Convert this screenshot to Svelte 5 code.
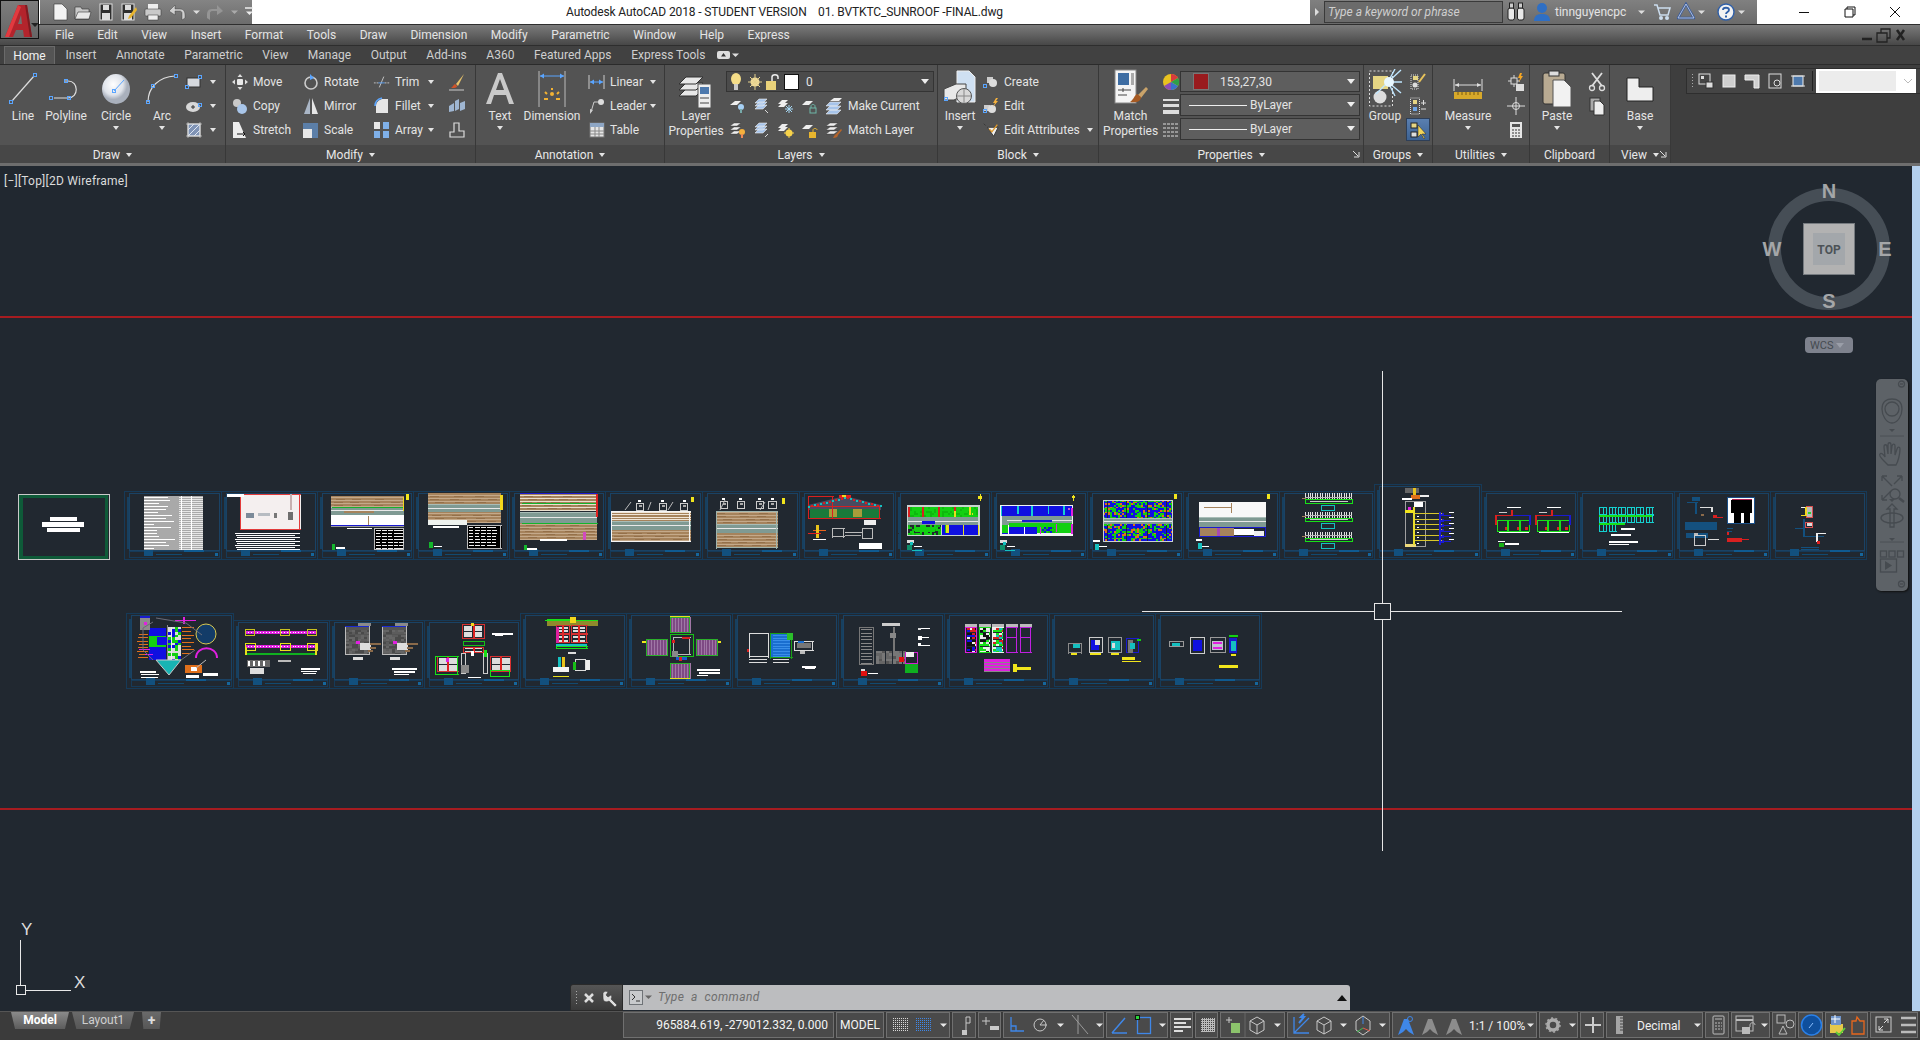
<script>
  // icon helpers: each icon is a small svg string
  const ic = (w, h, body) => `<svg width="${w}" height="${h}" viewBox="0 0 ${w} ${h}" fill="none">${body}</svg>`;
  const B = "#5aa5ff";
  const grip = (x, y) => `<rect x="${x - 1.5}" y="${y - 1.5}" width="3" height="3" stroke="${B}"/>`;
  const dn = (x, y, c = "#e8e8e8") => `<path d="M${x - 3} ${y - 1.5}h7l-3.5 3.5z" fill="${c}"/>`;

  const icons = {
    line: ic(32, 34, `<path d="M5 29 27 4" stroke="#ddd" stroke-width="1.2"/>${grip(4, 30)}${grip(28, 3)}`),
    polyline: ic(36, 34, `<path d="M6 26H20M20 9H17M20 9C31 9 31 26 20 26" stroke="#ddd" stroke-width="1.2"/>${grip(3, 26)}${grip(21, 26)}${grip(18, 9)}`),
    circle: ic(32, 34, `<defs><radialGradient id="cg" cx=".4" cy=".35"><stop offset="0" stop-color="#fff"/><stop offset=".7" stop-color="#dfe3ea"/><stop offset="1" stop-color="#a9b0bc"/></radialGradient></defs><ellipse cx="16" cy="17" rx="14" ry="15" fill="url(#cg)"/><path d="M14 19 24 8" stroke="${B}"/>${grip(14, 19)}`),
    arc: ic(34, 34, `<path d="M3 30C3 15 14 5 30 4" stroke="#ddd" stroke-width="1.2"/>${grip(3, 30)}${grip(31, 4)}${grip(8, 14)}`),
    rect: ic(18, 16, `<rect x="2" y="4" width="13" height="9" fill="#d5d8dd" stroke="#333"/>${grip(2, 13)}${grip(15, 3)}`),
    ellipseS: ic(18, 16, `<ellipse cx="8" cy="9" rx="7" ry="5" fill="#d8d8d8"/><path d="M6 9h4M8 7v4" stroke="#333"/>${grip(15, 7)}`),
    hatch: ic(18, 18, `<rect x="3" y="3" width="12" height="12" fill="#7f93b5" stroke="#eee"/><path d="M3 9 9 3M3 15 15 3M9 15l6-6" stroke="#dfe6f2"/><path d="M1 3h16M1 15h16M3 1v16M15 1v16" stroke="#ddd" stroke-width=".6"/>`),
    move: ic(18, 18, `<rect x="6" y="6" width="6" height="6" rx="1" fill="#e8e8e8"/><path d="M9 1 6.5 4h5zM9 17l-2.5-3h5zM1 9l3-2.5v5zM17 9l-3-2.5v5z" fill="#ddd"/>`),
    copy: ic(18, 18, `<circle cx="6" cy="6" r="4" fill="#c9c9c9"/><circle cx="11" cy="12" r="5" fill="#a9c6ea"/>`),
    stretch: ic(18, 20, `<path d="M2 2h6l7 16H2z" fill="#eee"/><path d="M6 14h8m-2-2 2 2-2 2" stroke="#111"/>`),
    rotate: ic(18, 18, `<circle cx="9" cy="10" r="6" stroke="#ccc" stroke-width="1.6"/><path d="M8 1v6l4-2z" fill="${B}"/>`),
    mirror: ic(18, 20, `<path d="M8 2v16H2z" fill="#aab6c6"/><path d="M10 2v16h6z" fill="#e6e6e6"/>`),
    scale: ic(18, 18, `<rect x="1" y="2" width="15" height="15" fill="#5c7fa8"/><rect x="1" y="8" width="9" height="9" fill="#e8e8e8"/>`),
    trim: ic(20, 16, `<path d="M1 9h5M13 9h6" stroke="#ccc" stroke-dasharray="2 1"/><path d="M7 14 12 2" stroke="#ccc"/><path d="M6 9h7" stroke="${B}"/>`),
    fillet: ic(18, 18, `<path d="M3 16V9C3 5 6 3 9 2h6v14z" fill="#e6e6e6"/><path d="M2 9C2 5 5 2 9 1" stroke="${B}" stroke-width="1.6"/>`),
    array: ic(18, 18, `<rect x="1" y="1" width="6" height="7" fill="#e8e8e8"/><rect x="10" y="1" width="6" height="7" fill="#7fb0e8"/><rect x="1" y="10" width="6" height="7" fill="#7fb0e8"/><rect x="10" y="10" width="6" height="7" fill="#7fb0e8"/>`),
    brush: ic(18, 18, `<path d="M16 1 8 11l2 2z" fill="#e9c36a"/><path d="M7 11c-2 1-2 3-4 4 3 0 6 0 6-2z" fill="#d2542a"/><path d="M1 17h15" stroke="#ccc"/>`),
    explode: ic(18, 16, `<path d="M1 8 6 5v8L1 14zM7 3l4-2v10l-4 2zM12 5l5-2v8l-5 2z" fill="#9fb6d2"/>`),
    edit: ic(18, 18, `<path d="M6 2h5v8h5v6H2v-5h4z" stroke="#ddd" stroke-width="1.2"/>`),
    textA: ic(30, 36, `<path d="M1 33 13 2h4l12 31h-5l-3-9H9l-3 9zM11 19h8L15 8z" fill="#c9c9c9"/>`),
    dim: ic(32, 38, `<path d="M3 1v36M29 1v36" stroke="#bbb"/><path d="M4 6h24" stroke="${B}"/><path d="M4 6l4-2.5v5zM28 6l-4-2.5v5z" fill="${B}"/><circle cx="16" cy="24" r="2" fill="#f2b233"/><path d="M16 20v-2M11 24l-2-2M21 24l2-2M8 29h4M20 29h4" stroke="#f2b233" stroke-width="2"/>`),
    linear: ic(18, 18, `<path d="M1 2v14M16 2v14" stroke="#ccc"/><path d="M2 9h13" stroke="${B}"/><path d="M2 9l4-2.5v5zM15 9l-4-2.5v5z" fill="${B}"/>`),
    leader: ic(18, 18, `<circle cx="13" cy="5" r="3" fill="#ddd"/><path d="M10 5H6L3 15" stroke="#ccc"/><path d="M2 17l0-5 3 1z" fill="#ccc"/>`),
    table: ic(18, 18, `<rect x="2" y="2" width="14" height="14" fill="#e6e6e6" stroke="#777"/><rect x="2" y="2" width="14" height="4" fill="#8ea6c4"/><path d="M7 6v10M11 6v10M2 10h14M2 13h14" stroke="#888"/>`),
    layerP: ic(36, 40, `<g fill="#e8e8e8" stroke="#333"><path d="M1 27 8 20h17l-7 7z"/><path d="M1 21 8 14h17l-7 7z"/><path d="M1 15 8 8h17l-7 7z"/></g><rect x="20" y="15" width="13" height="24" fill="#eee" stroke="#555"/><rect x="22" y="18" width="9" height="7" fill="#4d79ad"/><path d="M22 29h9M22 34h9" stroke="#444"/>`),
    bulb: ic(16, 20, `<ellipse cx="7" cy="7" rx="5" ry="6" fill="#f5dd88"/><rect x="5" y="12" width="4" height="6" fill="#c9c9c9"/>`),
    sun: ic(16, 18, `<circle cx="8" cy="9" r="4.5" fill="#f1dc9b"/><path d="M8 1v16M1 9h14M3 4l10 10M13 4 3 14" stroke="#e6d28e"/>`),
    lockO: ic(16, 18, `<rect x="1" y="8" width="10" height="9" fill="#e9d27a"/><path d="M7 8V4c0-3 6-3 6 0v2" stroke="#eee" stroke-width="1.5"/>`),
    white: ic(15, 18, `<rect x=".5" y="1.5" width="14" height="15" fill="#fff" stroke="#111"/>`),
    ly1: ic(18, 18, `<path d="M1 8 6 4h6L8 8z" fill="#eee"/><circle cx="12" cy="10" r="3" fill="#a6d0f5"/><rect x="11" y="12" width="2" height="4" fill="#7aa"/>`),
    ly2: ic(18, 18, `<path d="M2 6 6 2h8l-4 4zM2 9l4-4h8l-4 4zM2 12l4-4h8l-4 4z" fill="#a6c4ea" stroke="#eee" stroke-width=".6"/><path d="M12 13l3 3" stroke="#ddd"/>`),
    ly3: ic(18, 18, `<path d="M1 7 5 3h6L7 7zM1 10l4-4h6l-4 4z" fill="#eee"/><path d="M12 8v8M8 12h8M9 9l6 6M15 9l-6 6" stroke="#a6d8f5"/>`),
    ly4: ic(18, 18, `<path d="M1 8 5 4h7L8 8z" fill="#eee"/><rect x="9" y="11" width="6" height="5" stroke="#6fb7a8"/><path d="M10 11V9c0-2 4-2 4 0v2" stroke="#6fb7a8"/>`),
    ly5: ic(20, 18, `<path d="M2 9 6 5h11l-4 4zM2 13l4-4h11l-4 4zM2 17l4-4h11l-4 4z" fill="#a6c4ea" stroke="#eee" stroke-width=".6"/><path d="M6 4 10 1h8l-3 3z" fill="#eee"/>`),
    ly6: ic(18, 18, `<path d="M1 5 5 2h7L8 5zM1 9l4-3h7L8 9zM1 13l4-3h7l-4 3z" fill="#eee" stroke="#333" stroke-width=".4"/><circle cx="13" cy="11" r="3" fill="#f5b13d"/><rect x="12" y="13" width="2" height="4" fill="#e85"/>`),
    ly7: ic(18, 18, `<path d="M2 6 6 2h8l-4 4zM2 9l4-4h8l-4 4zM2 12l4-4h8l-4 4z" fill="#a6c4ea" stroke="#eee" stroke-width=".6"/><path d="M12 16l3-3" stroke="#ddd"/>`),
    ly8: ic(18, 18, `<path d="M1 7 5 3h6L7 7zM1 10l4-4h6l-4 4z" fill="#eee"/><circle cx="12" cy="12" r="3.5" fill="#f7d24a"/><path d="M12 7v10M7 12h10" stroke="#f7d24a"/>`),
    ly9: ic(18, 18, `<path d="M1 8 5 4h7L8 8z" fill="#eee"/><rect x="8" y="11" width="7" height="6" fill="#e8b52e"/><path d="M12 11V9c0-2 4-2 4 0" stroke="#e8b52e"/>`),
    ly10: ic(20, 18, `<path d="M2 5 6 2h8l-4 3zM2 9l4-3h8l-4 3zM2 13l4-3h8l-4 3z" fill="#eee" stroke="#333" stroke-width=".4"/><path d="M17 8l-5 5c-2 1-2 3-3 4 3 0 5-1 5-3l4-5z" fill="#b5642b"/>`),
    insert: ic(34, 38, `<path d="M14 1h12l6 6v25H14z" fill="#cfe0f2" stroke="#eee"/><path d="M1 19l12-5h10v10L11 30H1z" fill="#e8e8e8" stroke="#444"/><circle cx="21" cy="26" r="7.5" fill="#d8d8d8" stroke="#555"/><path d="M21 19v14M14 26h14" stroke="#888"/>${grip(3, 29)}`),
    create: ic(18, 16, `<rect x="5" y="3" width="6" height="6" fill="#ccc"/><circle cx="11" cy="9" r="4" fill="#ddd"/>${grip(3, 12)}`),
    editB: ic(18, 18, `<rect x="2" y="8" width="6" height="6" fill="#ccc"/><circle cx="10" cy="12" r="4" fill="#ddd"/><path d="M14 1l-3 5h2l-2 4 5-6h-2l2-3z" fill="#f5b13d"/>${grip(3, 14)}`),
    attr: ic(20, 18, `<path d="M2 2l2 2M6 6h12l-5 10z" fill="#eee" stroke="#333"/><path d="M8 8l3 3 6-8" stroke="#e09a2b" stroke-width="1.5"/>`),
    match: ic(36, 40, `<rect x="2" y="1" width="21" height="33" fill="#f4f4f4" stroke="#888"/><rect x="5" y="4" width="11" height="12" fill="#3e6da3"/><rect x="18" y="4" width="3" height="12" fill="#aaa"/><path d="M5 21h13M5 26h9M10 19v4" stroke="#444"/><path d="M33 18 25 26l3 3 7-9z" fill="#c9a36a"/><path d="M24 25c-3 2-3 5-7 8 5 1 11 0 11-5z" fill="#a65a23"/>`),
    wheel: ic(18, 18, `<circle cx="9" cy="9" r="8" fill="#e8c21f"/><path d="M9 9V1a8 8 0 0 1 7 4z" fill="#d83c3c"/><path d="M9 9l7-4a8 8 0 0 1 0 8z" fill="#2fa04a"/><path d="M9 9l7 4a8 8 0 0 1-7 4z" fill="#3a73c9"/><path d="M9 9v8a8 8 0 0 1-7-4z" fill="#8c4db5"/>`),
    lw: ic(18, 18, `<rect x="1" y="2" width="16" height="2" fill="#ddd"/><rect x="1" y="7" width="16" height="3" fill="#ddd"/><rect x="1" y="13" width="16" height="4" fill="#ddd"/>`),
    ltype: ic(18, 18, `<path d="M1 3h16M1 7h16M1 11h16M1 15h16" stroke="#ddd" stroke-dasharray="3 1"/>`),
    group: ic(34, 40, `<rect x="1.500" y="2" width="23" height="35" stroke="#ddd" stroke-dasharray="2 2"/><rect x="5" y="7" width="15" height="13" fill="#e6d684"/><circle cx="12" cy="28" r="6.500" fill="#ddd"/><path d="M20 13 33 1M20 13 33 24M20 13h14M20 13 27 0M20 13 27 27M20 13 8 25" stroke="#bfe6ff" stroke-width="1.400"/><circle cx="21" cy="13" r="5" fill="#e8f7ff"/>`),
    gr1: ic(18, 18, `<rect x="2" y="2" width="7" height="14" stroke="#ddd" stroke-dasharray="1 1"/><rect x="4" y="3" width="5" height="4" fill="#e6d684"/><circle cx="6" cy="12" r="2.500" fill="#ddd"/><path d="M16 1 10 9" stroke="#e8c35a" stroke-width="2"/>`),
    gr2: ic(18, 20, `<rect x="1.500" y="2" width="9" height="16" stroke="#ddd" stroke-dasharray="1 1"/><rect x="4" y="4" width="4" height="4" fill="#e6d684"/><rect x="4" y="11" width="4" height="4" fill="#6fa6e6"/><path d="M12 7h5M14.500 4v5M12 13h5" stroke="#ddd"/>`),
    gr3: ic(18, 20, `<rect x="2" y="3" width="6" height="5" fill="#e6d684" stroke="#222"/><rect x="2" y="12" width="6" height="5" fill="#ddd" stroke="#222"/><path d="M9 5v12l3-3 3 5 1-1-3-4h4z" fill="#f0d35a" stroke="#222" stroke-width=".5"/>`),
    measure: ic(32, 30, `<path d="M2 5v12M30 5v12" stroke="#ddd"/><path d="M3 11h26" stroke="#ddd"/><path d="M3 11l4-2v4zM29 11l-4-2v4z" fill="#ddd"/><rect x="2" y="18" width="28" height="7" fill="#d8a92a"/><path d="M6 18v3M10 18v3M14 18v3M18 18v3M22 18v3M26 18v3" stroke="#7a5b12"/>`),
    qs: ic(18, 20, `<path d="M1 9h12M7 3v12" stroke="#ddd"/><rect x="4" y="6" width="6" height="6" fill="#555" stroke="#ddd"/><rect x="9" y="12" width="8" height="7" fill="#ddd"/><path d="M13 1l-2 5h2l-1 4 4-6h-2l1-3z" fill="#f5a623"/>`),
    idpt: ic(18, 18, `<circle cx="9" cy="9" r="3.500" stroke="#ddd"/><path d="M0 9h18M9 0v18" stroke="#ddd"/>`),
    calc: ic(16, 18, `<rect x="2" y="1" width="12" height="16" fill="#e6e6e6"/><rect x="4" y="3" width="8" height="3" fill="#555"/><path d="M4 9h2M7 9h2M10 9h2M4 12h2M7 12h2M10 12h2M4 15h2M7 15h2M10 15h2" stroke="#333"/>`),
    paste: ic(30, 38, `<rect x="1" y="3" width="22" height="31" rx="2" fill="#b8aa92" stroke="#333"/><rect x="7" y="1" width="10" height="5" fill="#ddd" stroke="#333"/><path d="M11 10h11l7 7v20H11z" fill="#f2f2f2" stroke="#555"/>`),
    cut: ic(18, 20, `<path d="M4 1l10 13M14 1 4 14" stroke="#ddd" stroke-width="1.800"/><circle cx="4" cy="16" r="2.500" stroke="#ddd" stroke-width="1.300"/><circle cx="14" cy="16" r="2.500" stroke="#ddd" stroke-width="1.300"/>`),
    copyC: ic(18, 20, `<rect x="2" y="2" width="10" height="13" fill="#aaa" stroke="#333"/><path d="M6 5h6l4 4v10H6z" fill="#eee" stroke="#333"/>`),
    base: ic(28, 26, `<path d="M1 2h12v9h14v14H1z" fill="#eee" stroke="#222"/>`),
    vp1: ic(16, 16, `<rect x="1" y="1" width="11" height="10" stroke="#ddd"/><rect x="3" y="3" width="3" height="3" fill="#ddd"/><rect x="8" y="9" width="7" height="6" fill="#ddd" stroke="#333"/>`),
    vp2: ic(16, 16, `<rect x="2" y="2" width="12" height="12" fill="#cfcfcf" stroke="#eee"/>`),
    vp3: ic(16, 16, `<path d="M1 2h14v13h-5V7H1z" fill="#cfcfcf" stroke="#eee"/>`),
    vp4: ic(16, 16, `<rect x="2" y="1" width="12" height="14" stroke="#ddd"/><circle cx="10" cy="10" r="3" stroke="#ddd"/>`),
    vp5: ic(16, 16, `<rect x="3" y="3" width="10" height="10" fill="#4d79ad" stroke="#eee"/><path d="M1 3h14M1 13h14" stroke="#ddd"/>`),
  };

  // quick access toolbar, x positions come from its flex gaps
  const qat = [
    ic(16, 18, `<path d="M2 1h8l5 5v11H2z" fill="#f2f2f2" stroke="#333" stroke-width=".6"/>`),
    ic(18, 18, `<path d="M1 4h6l1 2h7v10H1z" fill="#c9c9c9" stroke="#333" stroke-width=".6"/><path d="M1 16 4 9h13l-2 7z" fill="#e8e8e8" stroke="#333" stroke-width=".6"/>`),
    ic(16, 18, `<rect x="2" y="1" width="12" height="16" fill="#2e2e2e" stroke="#ddd"/><rect x="5" y="2" width="6" height="5" fill="#ddd"/><rect x="4" y="10" width="8" height="7" fill="#ddd"/>`),
    ic(18, 18, `<rect x="2" y="1" width="12" height="16" fill="#2e2e2e" stroke="#ddd"/><rect x="5" y="2" width="6" height="5" fill="#ddd"/><rect x="4" y="10" width="8" height="7" fill="#ddd"/><path d="M16 4 9 13l-1 3 3-1 6-8z" fill="#e8b52e"/>`),
    ic(18, 18, `<rect x="4" y="1" width="10" height="6" fill="#eee"/><rect x="1" y="6" width="16" height="7" rx="1" fill="#c9c9c9" stroke="#333" stroke-width=".5"/><rect x="4" y="12" width="10" height="5" fill="#eee" stroke="#333" stroke-width=".5"/>`),
    ic(18, 18, `<path d="M1 8 7 2v4h5c4 0 5 3 5 6v3l-3 2v-7c0-1-1-2-2-2H7v4z" fill="#d0d0d0" stroke="#333" stroke-width=".4"/>`),
    ic(8, 18, dn(4, 9, "#ddd")),
    ic(18, 18, `<path d="M17 8 11 2v4H6c-4 0-5 3-5 6v3l3 2v-7c0-1 1-2 2-2h5v4z" fill="#959595"/>`),
    ic(8, 18, dn(4, 9, "#aaa")),
    ic(10, 18, `<path d="M1 5h8" stroke="#eee" stroke-width="1.500"/>${dn(5, 10, "#eee")}`),
  ];

  const menus = ["File", "Edit", "View", "Insert", "Format", "Tools", "Draw", "Dimension", "Modify", "Parametric", "Window", "Help", "Express"];
  const tabs = ["Insert", "Annotate", "Parametric", "View", "Manage", "Output", "Add-ins", "A360", "Featured Apps", "Express Tools"];

  // status bar cells, w is the cell width and body draws in local coords (y centre 13)
  const ico = "#c8c8c8";
  const dotsGrid = (x, y, c, n, m, st) => {
    let o = "";
    for (let i = 0; i < n; i++) for (let j = 0; j < m; j++) o += `<rect x="${x + i * st}" y="${y + j * 2}" width="1" height="1" fill="${c}"/>`;
    return o;
  };
  const figure = (x, c) => `<path d="M${x + 7} 7 ${x + 1} 23l5-3 3-3 3 3 5 3-6-16z" fill="${c}"/>`;
  const status = [
    { w: 211, text: "965884.619, -279012.332, 0.000", right: true },
    { w: 48, text: "MODEL" },
    { w: 64, body: dotsGrid(6, 6, "#d8d8d8", 8, 7, 2) + dotsGrid(29, 6, "#3f87e8", 8, 7, 2) + dn(56, 13) },
    { w: 24, body: `<path d="M13 19V5h4v6h-4" stroke="${ico}"/><rect x="9" y="18" width="5" height="5" fill="${ico}"/>` },
    { w: 23, body: `<path d="M3 9h8M7 5v8" stroke="${ico}"/><rect x="11" y="14" width="9" height="4" fill="${ico}"/>` },
    { w: 101, body: `<path d="M7 5v14h13M7 14h5v5" stroke="#3f87e8" stroke-width="1.300"/><circle cx="36" cy="13" r="6" stroke="${ico}"/><path d="M36 13h7M36 13l4-5" stroke="${ico}"/>${dn(56, 13)}<path d="M68 3 84 22M74 3v19" stroke="#9a9a9a"/>${dn(95, 13)}` },
    { w: 62, body: `<path d="M5 21H20M5 21 18 6" stroke="#3f87e8" stroke-width="1.500"/><rect x="30.500" y="5.500" width="13" height="16" stroke="#3f87e8" stroke-width="1.300"/><rect x="28" y="3" width="5" height="5" fill="#111"/><rect x="29" y="4" width="3" height="3" fill="#2bd63a"/>${dn(55, 13)}` },
    { w: 23, body: `<path d="M3 7h17M3 11h12M3 15h17M3 19h9" stroke="#ddd" stroke-width="2"/>` },
    { w: 23, body: `<rect x="5" y="6" width="14" height="14" fill="#bbb"/>${dotsGrid(5, 6, "#444", 7, 7, 2)}` },
    { w: 65, body: `<path d="M5 8h6M8 5v6" stroke="${ico}"/><rect x="10" y="11" width="9" height="10" fill="#8cc36c"/><path d="M24 1v25" stroke="#666"/><path d="M36 5 43 9v9l-7 4-7-4V9zM29 9l7 4 7-4M36 13v9" stroke="${ico}"/>${dn(56, 13)}` },
    { w: 103, body: `<path d="M6 5v16h15M6 21l15-15" stroke="#3f87e8" stroke-width="1.300"/><path d="M11 11 16 5h-3l3-3" stroke="#3f87e8" stroke-width="2"/><path d="M36 5 43 9v9l-7 4-7-4V9zM29 9l7 4 7-4M36 13v9" stroke="${ico}"/>${dn(55, 13)}<path d="M75 4 82 9v9l-7 5-7-5V9z" stroke="${ico}"/><path d="M75 5v7" stroke="#3f87e8"/><path d="M75 16l-6 4" stroke="#3fbf4f"/><path d="M75 16l7 3" stroke="#e05a4a"/>${dn(94, 13)}` },
    { w: 145, body: figure(4, "#3f87e8") + `<circle cx="17" cy="7" r="2.500" stroke="#3f87e8"/>` + figure(28, "#8c8c8c") + figure(52, "#8c8c8c") + `<text x="76" y="17.500" class="st">1:1 / 100%</text>` + dn(137, 13) },
    { w: 39, body: `<circle cx="13" cy="13" r="5" stroke="#aaa" stroke-width="3.500"/><circle cx="13" cy="13" r="7" stroke="#aaa" stroke-width="1.500" stroke-dasharray="2 2.400"/>${dn(32, 13)}` },
    { w: 24, body: `<path d="M12 5v16M4 13h16" stroke="#ccc" stroke-width="2"/>` },
    { w: 97, body: `<rect x="9" y="4" width="7" height="18" fill="#a5a5a5"/><path d="M13 6h3M13 9h3M13 12h3M13 15h3M13 18h3" stroke="#444"/><text x="30" y="17.500" class="st">Decimal</text>${dn(90, 13)}` },
    { w: 24, body: `<rect x="7" y="4" width="11" height="18" rx="1" stroke="#bbb"/><path d="M9 7h7M9 11h2M12 11h2M15 11h1M9 14h2M12 14h2M15 14h1M9 17h2M12 17h2M15 17h1" stroke="#bbb"/>` },
    { w: 39, body: `<rect x="4" y="4" width="17" height="15" stroke="#bbb"/><path d="M4 8h17" stroke="#bbb" stroke-width="2"/><rect x="10" y="15" width="8" height="7" fill="#bbb"/><path d="M18 15v-2c0-3 5-3 5 0" stroke="#bbb"/>${dn(32, 13)}` },
    { w: 24, body: `<rect x="4" y="3" width="8" height="8" stroke="#bbb"/><circle cx="17" cy="12" r="4" stroke="#bbb"/><path d="M10 14l4 8H6z" stroke="#bbb"/>` },
    { w: 25, body: `<circle cx="12.500" cy="13" r="10" fill="#0f4f9c" stroke="#2a80e8" stroke-width="1.500"/><path d="M10 16l4-5" stroke="#8cc0ff"/>` },
    { w: 43, body: `<rect x="4" y="12" width="13" height="9" fill="#e6c94a"/><rect x="5" y="4" width="10" height="9" fill="#6f94c9"/><path d="M9 3v8M5 7h9" stroke="#fff"/><path d="M10 20l3 3 6-7" stroke="#5fd03a" stroke-width="1.800"/><path d="M26 9h4l1-4 3 4h4v13H26z" stroke="#e8671d" stroke-width="1.300"/>` },
    { w: 48, body: `<rect x="5" y="5" width="15" height="15" stroke="#ccc"/><path d="M8 18l4-4M8 14v4h4M17 7l-4 4M13 7h4v4" stroke="#ddd"/><path d="M30 6h15M30 13h15M30 20h15" stroke="#bbb" stroke-width="2.400"/>` },
  ];

  // model space: everything here is in page coordinates, read off the crops of the sheets
  const rects = [];
  const crop = (ox, oy, sx) => (x1, y1, x2, y2, c) =>
    rects.push({ x: ox + x1 / sx, y: oy + y1 / 3, w: Math.max((x2 - x1) / sx, 1), h: Math.max((y2 - y1) / 3, 1), c });
  const L = crop(0, 480, 2.376);
  const M = crop(640, 480, 2.376);
  const R = crop(1290, 470, 2.489);
  const P = crop(895, 488, 3);

  const box = (f, x1, y1, x2, y2, c, t = 3) => {
    f(x1, y1, x2, y1 + t, c);
    f(x1, y2 - t, x2, y2, c);
    f(x1, y1, x1 + t, y2, c);
    f(x2 - t, y1, x2, y2, c);
  };
  let seed = 7;
  const rnd = () => ((seed = (seed * 16807) % 2147483647) % 1000) / 1000;
  const noise = (f, x1, y1, x2, y2, cols, st = 6) => {
    for (let y = y1; y < y2; y += st) for (let x = x1; x < x2; x += st) f(x, y, Math.min(x + st, x2), Math.min(y + st, y2), cols[Math.floor(rnd() * cols.length)]);
  };
  const brown = (f, x1, y1, x2, y2, line = "#c4a98a") => {
    f(x1, y1, x2, y2, "#a6835c");
    for (let y = y1 + 4; y < y2; y += 9) f(x1, y, x2, y + 2, line);
    for (let y = y1 + 8; y < y2 - 3; y += 9) for (let x = x1 + rnd() * 20; x < x2 - 24; x += 30 + rnd() * 30) f(x, y, x + 22, y + 3, "#94704a");
  };
  const band = (f, x1, y1, x2, y2) => {
    f(x1, y1, x2, y2, "#7f9a93");
    f(x1, y1 + (y2 - y1) / 2 - 1, x2, y1 + (y2 - y1) / 2 + 1, "#e8e8e8");
    f(x1, y1, x2, y1 + 3, "#a9bdb7");
  };
  const stable = (f, x1, y1, x2, y2) => {
    f(x1, y1, x2, y2, "#000");
    box(f, x1, y1, x2, y2, "#bbb");
    for (let y = y1 + 6; y < y2 - 3; y += 9) for (let x = x1 + 4; x < x2 - 8; x += 14) f(x, y, x + 9 + rnd() * 4, y + 3, "#eee");
  };
  const lines = (f, x, y, w, n, c = "#fff", st = 6) => {
    for (let i = 0; i < n; i++) f(x + (i % 3) * 3, y + i * st, x + w - (i % 2) * 12, y + i * st + 3, c);
  };

  // title sheet
  L(46, 45, 258, 237, "#0e5a38");
  L(55, 54, 250, 228, "#212830");
  box(L, 43, 42, 261, 240, "#c9c9c9");
  L(118, 110, 181, 122, "#fff");
  L(100, 126, 200, 142, "#fff");
  L(112, 144, 190, 156, "#fff");

  // row 1
  L(342, 48, 481, 210, "#a9a9a9");
  for (let y = 51; y < 208; y += 9) L(342, y, 360 + rnd() * 60, y + 4, "#fff");
  for (let y = 51; y < 208; y += 6) L(425, y, 481, y + 2, "#e6e6e6");
  L(430, 48, 433, 210, "#fff");
  L(455, 48, 458, 210, "#fff");

  L(570, 42, 714, 150, "#f4efef");
  box(L, 570, 42, 714, 150, "#e23b3b");
  L(540, 42, 580, 50, "#fff");
  L(585, 100, 605, 115, "#7c8a99");
  L(612, 100, 640, 110, "#b7bcc2");
  L(684, 97, 697, 120, "#6e6e6e");
  L(650, 98, 656, 112, "#777");
  L(690, 42, 694, 90, "#c7b0b0");
  lines(L, 558, 158, 155, 9);

  const sheetA = (f, x1, y1, x2) => {
    brown(f, x1, y1, x2, y1 + 32);
    band(f, x1, y1 + 32, x2, y1 + 56);
  };
  sheetA(L, 787, 48, 960);
  L(787, 104, 960, 135, "#fff");
  L(787, 134, 960, 138, "#1a1ad0");
  L(787, 138, 960, 142, "#9a9a9a");
  L(788, 80, 960, 83, "#16b02e");
  L(818, 92, 890, 98, "#a6835c");
  L(874, 108, 877, 134, "#a6835c");
  L(957, 50, 960, 92, "#f1d71c");
  L(965, 42, 972, 60, "#f1e51c");
  stable(L, 889, 145, 960, 210);
  L(790, 192, 798, 210, "#13b52c");
  L(798, 202, 820, 208, "#fff");
  L(825, 143, 885, 146, "#fff");

  sheetA(L, 1018, 40, 1192);
  brown(L, 1018, 96, 1192, 128);
  L(1018, 120, 1110, 135, "#eef2ee");
  L(1188, 45, 1195, 90, "#f1d71c");
  stable(L, 1110, 135, 1192, 207);
  L(1028, 138, 1090, 144, "#fff");
  L(1020, 185, 1030, 203, "#13b52c");
  L(1032, 197, 1052, 200, "#fff");

  brown(L, 1236, 40, 1420, 95, "#eadfce");
  band(L, 1236, 95, 1420, 128);
  brown(L, 1236, 128, 1420, 178);
  L(1236, 40, 1420, 43, "#1a1ad0");
  L(1240, 70, 1420, 73, "#13b52c");
  L(1240, 128, 1420, 131, "#13b52c");
  L(1417, 42, 1421, 110, "#e02020");
  L(1385, 155, 1392, 178, "#d24ac0");
  L(1282, 178, 1345, 183, "#fff");
  L(1244, 195, 1252, 210, "#13b52c");
  L(1252, 204, 1276, 209, "#fff");

  // roof units drawn above the two long sections
  const units = (f, arr, y) => {
    for (const x of arr) {
      box(f, x, y, x + 20, y + 24, "#ccc");
      f(x + 6, y - 9, x + 14, y - 3, "#fff");
      f(x + 7, y + 8, x + 13, y + 15, "#aaa");
    }
  };
  M(-70, 92, 120, 130, "#a6835c");
  for (let y = 96; y < 130; y += 7) M(-70, y, 120, y + 3, "#f0e6d8");
  band(M, -70, 122, 120, 150);
  brown(M, -70, 150, 120, 185);
  box(M, -70, 92, 120, 186, "#f5f5f5");
  units(M, [-10, 45, 95], 68);
  M(120, 50, 127, 66, "#f1e51c");
  units(M, [190, 230, 275, 305], 62);
  brown(M, 180, 92, 327, 132);
  band(M, 180, 132, 327, 160);
  brown(M, 180, 160, 327, 205);
  box(M, 180, 92, 327, 205, "#9fb4ad");
  M(338, 55, 344, 72, "#f1e51c");

  // roof elevation sheet
  M(404, 86, 570, 113, "#197a3a");
  M(448, 88, 468, 113, "#a89c3a");
  M(507, 88, 528, 113, "#a89c3a");
  box(M, 398, 48, 460, 118, "#d82020");
  box(M, 398, 78, 572, 118, "#d82020");
  M(472, 46, 500, 56, "#e02020");
  M(480, 46, 490, 52, "#f1d71c");
  M(410, 150, 440, 153, "#e8641c");
  M(418, 135, 424, 175, "#e8c31c");
  M(400, 158, 430, 161, "#e02020");
  box(M, 456, 143, 486, 172, "#bbb");
  box(M, 528, 145, 555, 177, "#bbb");
  M(486, 155, 528, 158, "#bbb");
  M(486, 165, 525, 168, "#aaa");
  M(532, 120, 560, 136, "#eee");
  M(520, 188, 575, 205, "#fff");
  M(410, 178, 440, 181, "#fff");

  // coloured plans, the first two come from a closer crop
  const G = "#12d012", BL = "#1010e0";
  const legend = (x) => {
    P(x, 156, x + 20, 164, "#ddd");
    P(x, 170, x + 14, 186, "#0f8f6a");
    P(x + 8, 162, x + 18, 170, "#15c0c0");
    P(x + 20, 175, x + 44, 178, "#fff");
    P(x + 14, 186, x + 44, 189, "#15c0c0");
  };
  P(36, 52, 254, 146, "#c9d3d0");
  P(40, 56, 250, 88, G);
  noise(P, 40, 56, 250, 88, [G, G, G, "#0fb80f"], 6);
  for (const x of [40, 82, 128, 176]) P(x, 56, x + 6, 88, "#d82020");
  P(176, 70, 182, 88, "#e8e01c");
  P(222, 56, 228, 80, "#e8e01c");
  P(232, 74, 236, 80, "#e8e01c");
  P(40, 88, 250, 112, "#7f9a93");
  P(40, 98, 250, 102, "#e6e6e6");
  P(80, 98, 120, 106, BL);
  P(40, 112, 140, 142, G);
  noise(P, 40, 112, 140, 142, [G, G, "#0fb80f", "#212830"], 6);
  P(60, 118, 120, 132, G);
  P(140, 112, 250, 142, BL);
  P(150, 112, 162, 136, G);
  P(152, 112, 162, 136, "#e8e01c");
  P(205, 112, 209, 142, "#e8e01c");
  P(248, 112, 252, 142, "#e8e01c");
  P(8, 135, 8, 135, "#212830");
  legend(36);
  P(250, 24, 262, 32, "#f1e51c");
  P(254, 18, 258, 38, "#f1e51c");

  P(316, 50, 534, 144, "#f0f3f2");
  P(320, 54, 530, 84, BL);
  for (const [x, w, h] of [[318, 4, 30], [365, 5, 24], [408, 6, 30], [458, 4, 24], [503, 5, 28]]) P(x, 54, x + w, 54 + h, "#15d0d0");
  P(528, 60, 533, 84, "#e020e0");
  P(518, 60, 524, 66, "#c060d0");
  P(320, 84, 530, 106, "#7f9a93");
  P(335, 96, 530, 99, "#e6e6e6");
  P(380, 96, 470, 102, "#1a1ad0");
  P(320, 106, 530, 118, G);
  P(320, 106, 340, 118, "#7f9a93");
  P(320, 118, 425, 140, BL);
  P(320, 112, 340, 136, G);
  P(340, 110, 344, 138, "#fff");
  P(388, 118, 392, 138, "#fff");
  P(425, 118, 530, 136, G);
  noise(P, 440, 118, 480, 136, [G, "#0fb80f", BL], 6);
  P(436, 118, 440, 138, "#e020e0");
  P(484, 108, 488, 132, "#e020e0");
  P(527, 108, 532, 138, "#e020e0");
  legend(316);
  P(531, 24, 539, 30, "#f1e51c");
  P(534, 20, 537, 38, "#f1e51c");

  const plan = (x1, y1, x2, y2, top, bot) => {
    const mid = y1 + (y2 - y1) * 0.42;
    noise(M, x1, y1, x2, mid, top, 5);
    band(M, x1, mid, x2, mid + 20);
    noise(M, x1, mid + 20, x2, y2, bot, 5);
    box(M, x1, y1, x2, y2, "#c9d3d0");
  };
  plan(1101, 60, 1266, 187, [BL, BL, G, G, BL, "#e0701c"], [BL, BL, G, BL, G, "#e0701c"]);
  M(1076, 180, 1092, 186, "#fff");
  M(1080, 192, 1090, 210, "#15c0c0");
  M(1090, 198, 1110, 202, "#fff");
  M(1268, 42, 1275, 58, "#f1e51c");
  M(1327, 65, 1487, 110, "#f8f8f8");
  M(1340, 82, 1405, 85, "#a6835c");
  M(1405, 70, 1408, 100, "#a6835c");
  band(M, 1327, 110, 1487, 140);
  M(1330, 140, 1410, 170, "#a6835c");
  M(1412, 148, 1460, 166, "#fff");
  M(1460, 152, 1484, 166, "#eee");
  M(1370, 145, 1378, 168, "#a84ab0");
  box(M, 1327, 140, 1487, 170, "#1a1ad0");
  M(1320, 178, 1335, 184, "#fff");
  M(1325, 190, 1335, 208, "#15c0c0");
  M(1335, 198, 1352, 202, "#fff");
  M(1490, 42, 1497, 58, "#f1e51c");

  // comb-shaped detail stack
  for (const y of [0, 55, 115]) {
    for (let x = 38; x < 155; x += 6) R(x, 70 + y, x + 3, 88 + y, "#e2e2e2");
    R(38, 80 + y, 155, 84 + y, "#bbb");
    box(R, 38, 88 + y, 157, 101 + y, "#18e018");
    R(50, 93 + y, 145, 96 + y, "#ccc");
    box(R, 78, 105 + y, 113, 122 + y, "#15c0c0");
    R(30, 84 + y, 40, 87 + y, "#a6835c");
  }

  // riser diagram
  box(R, 285, 92, 338, 230, "#a0a0a0");
  R(285, 55, 320, 70, "#666");
  R(305, 55, 313, 75, "#e8c31c");
  R(305, 75, 345, 82, "#eee");
  R(300, 75, 322, 86, "#e0701c");
  R(280, 84, 305, 90, "#fff");
  R(308, 95, 330, 110, "#fff");
  R(294, 110, 302, 118, "#e020e0");
  R(285, 120, 310, 130, "#f1e51c");
  R(285, 222, 312, 232, "#eeda7c");
  R(305, 110, 310, 225, "#e8dd2c");
  for (let y = 130; y < 225; y += 16) {
    R(310, y, 370, y + 4, "#d8c62c");
    R(316, y + 8, 322, y + 11, "#fff");
    R(370, y, 382, y + 10, "#1a1ad0");
    R(372, y, 380, y + 4, "#d8c62c");
    R(395, y - 4, 408, y, "#fff");
    R(382, y + 4, 402, y + 7, "#1a1ad0");
  }
  R(372, 125, 378, 225, "#1a1ad0");

  // two small elevations
  for (const d of [0, 100]) {
    R(510 + d, 135, 600 + d, 138, "#1a1ad0");
    box(R, 515 + d, 150, 597 + d, 185, "#18e018");
    R(510 + d, 135, 514 + d, 165, "#d82020");
    R(515 + d, 135, 555 + d, 139, "#d82020");
    R(550 + d, 120, 555 + d, 135, "#d82020");
    R(595 + d, 135, 600 + d, 165, "#1a1ad0");
    R(535 + d, 172, 545 + d, 182, "#e02020");
    R(565 + d, 172, 575 + d, 182, "#e02020");
    R(585 + d, 172, 592 + d, 182, "#e02020");
    R(540 + d, 150, 544 + d, 182, "#18e018");
    R(570 + d, 150, 574 + d, 182, "#18e018");
    R(540 + d, 112, 575 + d, 115, "#fff");
    R(520 + d, 127, 540 + d, 131, "#ccc");
    R(520 + d, 186, 595 + d, 188, "#fff");
  }
  R(518, 212, 535, 215, "#fff");
  R(535, 219, 570, 224, "#fff");
  R(520, 220, 532, 232, "#18b018");

  // cyan grid
  for (let y = 110; y < 180; y += 26) {
    for (let x = 770; x < 905; x += 23) {
      if (y > 150 && x > 815) continue;
      box(R, x, y, x + 20, y + 24, "#15d0d0");
      R(x + 9, y, x + 11, y + 24, "#15d0d0");
    }
  }
  R(770, 134, 902, 140, "#18e018");
  R(770, 160, 835, 166, "#18e018");
  R(825, 175, 860, 180, "#fff");
  R(795, 213, 866, 218, "#fff");
  R(795, 222, 845, 226, "#fff");
  R(798, 192, 848, 198, "#fff");

  // duct sheet
  R(1000, 82, 1020, 95, "#12507e");
  R(988, 97, 1015, 100, "#12507e");
  R(1008, 95, 1014, 130, "#12507e");
  R(1020, 112, 1052, 116, "#ddd");
  R(1048, 112, 1052, 128, "#ddd");
  R(1022, 133, 1030, 138, "#8a6a4a");
  R(1052, 135, 1062, 145, "#d82020");
  R(1060, 141, 1078, 143, "#d82020");
  R(982, 155, 1062, 178, "#14507e");
  R(985, 190, 1040, 205, "#14507e");
  R(1005, 190, 1015, 200, "#bbb");
  box(R, 1005, 195, 1035, 228, "#ccc");
  R(1040, 208, 1068, 211, "#ddd");
  R(1087, 82, 1157, 162, "#fff");
  box(R, 1087, 82, 1157, 162, "#1a4f88");
  R(1098, 90, 1150, 130, "#000");
  R(1104, 130, 1122, 160, "#000");
  R(1130, 130, 1146, 160, "#000");
  R(1100, 87, 1150, 91, "#b02050");
  R(1088, 175, 1102, 178, "#12507e");
  R(1088, 183, 1100, 186, "#12507e");
  R(1088, 187, 1094, 197, "#e02020");
  R(1088, 205, 1125, 216, "#d82020");
  R(1125, 208, 1142, 211, "#d82020");

  // last sheet of row 1
  R(1285, 108, 1302, 145, "#bbb");
  box(R, 1285, 108, 1303, 145, "#d85050");
  R(1272, 110, 1285, 114, "#eee");
  R(1272, 135, 1285, 139, "#f1d71c");
  R(1283, 112, 1287, 138, "#f1d71c");
  R(1290, 125, 1298, 132, "#30d030");
  box(R, 1283, 156, 1303, 174, "#d85050");
  R(1287, 160, 1299, 170, "#ddd");
  R(1277, 147, 1281, 200, "#12507e");
  R(1258, 174, 1279, 177, "#12507e");
  R(1277, 197, 1330, 200, "#12507e");
  R(1308, 190, 1333, 194, "#eee");
  R(1308, 190, 1314, 218, "#eee");
  R(1312, 212, 1320, 220, "#e02020");
  R(1272, 230, 1318, 233, "#12507e");
  R(1272, 237, 1318, 240, "#12507e");

  // row 2 sheet 1
  L(355, 443, 395, 540, BL);
  L(357, 468, 395, 471, "#eee");
  L(357, 498, 395, 501, "#eee");
  L(400, 440, 430, 540, "#eee");
  noise(L, 400, 440, 430, 540, [BL, G, G, "#ddd", "#ddd"], 8);
  L(355, 468, 395, 500, G);
  L(372, 470, 395, 495, BL);
  L(396, 436, 399, 540, "#8a8a8a");
  L(332, 412, 356, 450, "#8d8d8d");
  L(332, 407, 356, 412, "#1a1ad0");
  L(342, 425, 350, 433, "#e020e0");
  for (let i = 0; i < 8; i++) {
    L(330 - (i % 3) * 2, 462 + i * 10, 352, 465 + i * 10, "#e0701c");
    L(432, 442 + i * 11, 460 - (i % 2) * 6, 446 + i * 11, "#e0701c");
  }
  L(330, 506, 355, 510, "#e020e0");
  L(345, 522, 365, 525, "#e020e0");
  L(415, 420, 465, 423, "#e020e0");
  L(435, 410, 440, 430, "#e020e0");
  L(440, 555, 480, 580, "#e0701c");
  L(455, 560, 470, 572, "#fff");
  L(333, 572, 372, 578, "#fff");
  L(335, 582, 378, 586, "#fff");
  L(335, 590, 375, 594, "#fff");
  L(482, 580, 518, 590, "#fff");
  L(443, 586, 475, 594, "#fff");

  // row 2 sheet 2
  for (const [a, b] of [[454, 463], [496, 506]]) {
    L(582, a, 750, b, "#e020e0");
    for (let x = 590; x < 745; x += 7) L(x, a + 3, x + 3, b - 3, "#fff");
  }
  for (const x of [582, 665, 730]) {
    box(L, x, 447, x + 24, 468, "#c8c020");
    box(L, x, 490, x + 26, 513, "#e8e01c");
  }
  L(582, 518, 752, 525, "#10b020");
  L(582, 500, 586, 525, "#e8e01c");
  L(748, 490, 752, 525, "#e8e01c");
  L(586, 540, 640, 562, "#666");
  for (let x = 590; x < 636; x += 12) L(x, 544, x + 4, 558, [G, "#e8e01c", "#fff"][x % 3]);
  L(594, 565, 628, 582, "#ddd");
  L(660, 541, 690, 548, "#bbb");
  L(714, 565, 760, 570, "#fff");
  L(714, 573, 752, 577, "#fff");
  L(720, 580, 750, 584, "#fff");

  // row 2 sheet 3
  for (const d of [0, 88]) {
    L(820 + d, 438, 880 + d, 526, "#555");
    noise(L, 822 + d, 450, 878 + d, 524, ["#5c5c5c", "#4a4a4a", "#666"], 7);
    box(L, 820 + d, 438, 880 + d, 526, "#bbb");
    L(820 + d, 438, 878 + d, 442, "#1a2ad0");
    L(850 + d, 430, 880 + d, 440, "#8a8a8a");
    L(845 + d, 482, 855 + d, 492, "#e020e0");
    L(855 + d, 490, 880 + d, 510, "#ddd");
    L(880 + d, 490, 905 + d, 497, "#8a6a4a");
    L(880 + d, 500, 895 + d, 507, "#8a6a4a");
    L(875 + d, 510, 888 + d, 516, "#8a6a4a");
    L(838 + d, 530, 862 + d, 540, "#ddd");
  }
  L(932, 565, 992, 570, "#fff");
  L(935, 573, 985, 578, "#fff");
  L(935, 582, 970, 585, "#fff");

  // row 2 sheet 4
  const tiles = (f, x, y, w, h) => {
    box(f, x, y, x + w, y + h, "#d83030");
    f(x + 5, y + 5, x + w / 2 - 2, y + h / 2 - 2, "#ddd");
    f(x + w / 2 + 2, y + 5, x + w - 5, y + h / 2 - 2, "#ddd");
    f(x + 5, y + h / 2 + 2, x + w / 2 - 2, y + h - 5, "#ddd");
    f(x + w / 2 + 2, y + h / 2 + 2, x + w - 5, y + h - 5, "#ddd");
    f(x + w / 2 - 2, y + 3, x + w / 2 + 2, y + h - 3, "#e02020");
  };
  tiles(L, 1098, 432, 54, 46);
  L(1120, 428, 1128, 436, "#f1d71c");
  box(L, 1100, 482, 1152, 498, "#18c018");
  tiles(L, 1100, 500, 50, 20);
  tiles(L, 1038, 528, 52, 48);
  box(L, 1034, 528, 1090, 586, "#18e018");
  tiles(L, 1165, 528, 50, 48);
  box(L, 1165, 570, 1212, 592, "#18e018");
  L(1060, 535, 1068, 548, "#e020e0");
  box(L, 1095, 520, 1107, 582, "#ccc");
  box(L, 1147, 520, 1160, 582, "#ccc");
  L(1150, 510, 1158, 530, "#18e018");
  L(1095, 555, 1115, 578, "#888");
  L(1170, 458, 1220, 463, "#fff");
  L(1175, 464, 1195, 468, "#fff");
  L(1112, 592, 1142, 595, "#fff");
  L(1120, 512, 1128, 526, "#fff");

  // row 2 sheet 5
  L(1295, 420, 1420, 424, "#18e018");
  L(1300, 424, 1420, 440, "#8f8a2c");
  L(1300, 418, 1355, 423, "#18e018");
  L(1355, 412, 1370, 430, "#f1d71c");
  tiles(L, 1320, 435, 34, 28);
  tiles(L, 1356, 435, 40, 28);
  tiles(L, 1320, 463, 34, 27);
  tiles(L, 1356, 463, 40, 27);
  L(1322, 440, 1330, 488, "#e020a0");
  L(1322, 492, 1396, 497, "#15c0c0");
  box(L, 1320, 497, 1396, 507, "#18e018");
  L(1350, 515, 1368, 520, "#ddd");
  L(1326, 530, 1334, 560, "#15c0c0");
  L(1336, 530, 1342, 560, "#e8c31c");
  L(1315, 562, 1352, 578, "#f4f4f4");
  L(1315, 588, 1352, 592, "#e8e01c");
  box(L, 1366, 538, 1392, 574, "#ddd");
  L(1362, 545, 1368, 570, "#18c018");
  L(1392, 540, 1402, 570, "#eee");

  // row 2 sheet 6, purple quarters
  const quarter = (x1, y1, x2, y2) => {
    M(x1, y1, x2, y2, "#7e4a84");
    for (let x = x1 + 4; x < x2; x += 7) M(x, y1, x + 2, y2, "#a077a6");
    box(M, x1, y1, x2, y2, "#2bb02b");
  };
  quarter(15, 478, 68, 528);
  quarter(133, 478, 185, 528);
  quarter(72, 410, 120, 458);
  quarter(72, 548, 120, 597);
  M(5, 484, 15, 490, "#f1e51c");
  M(185, 484, 192, 490, "#f1e51c");
  M(72, 407, 120, 411, "#e8e01c");
  M(72, 594, 120, 598, "#e8e01c");
  box(M, 72, 462, 128, 530, "#18c018");
  box(M, 78, 472, 120, 524, "#bbb");
  M(76, 480, 84, 490, "#d82020");
  M(100, 470, 118, 475, "#d82020");
  M(76, 512, 90, 530, "#888");
  M(85, 530, 110, 540, "#1a5ad0");
  M(92, 532, 100, 545, "#e02020");
  M(135, 568, 190, 573, "#fff");
  M(140, 576, 190, 582, "#fff");
  M(135, 586, 160, 590, "#fff");

  // row 2 sheet 7
  box(M, 258, 458, 306, 532, "#ddd");
  M(310, 458, 358, 532, "#1a6ed0");
  for (let y = 465; y < 530; y += 8) M(315, y, 355, y + 2, "#3a8ee8");
  box(M, 308, 458, 362, 535, "#18a018");
  M(350, 458, 364, 478, "#2bc02b");
  M(255, 507, 260, 516, "#d82020");
  M(260, 538, 303, 542, "#ddd");
  M(260, 546, 303, 550, "#ddd");
  M(315, 538, 352, 542, "#ddd");
  M(315, 546, 352, 550, "#ddd");
  box(M, 365, 483, 412, 512, "#ddd");
  M(372, 488, 405, 502, "#777");
  M(375, 483, 390, 488, "#1a6ed0");
  M(380, 512, 392, 520, "#bbb");
  M(386, 558, 420, 563, "#fff");
  M(392, 564, 415, 567, "#fff");

  // row 2 sheet 8
  box(M, 520, 442, 556, 556, "#777");
  for (let y = 448; y < 550; y += 10) M(525, y, 550, y + 3, "#888");
  M(574, 430, 616, 440, "#ccc");
  M(600, 440, 605, 515, "#777");
  M(595, 460, 610, 475, "#888");
  noise(M, 560, 512, 630, 552, ["#777", "#555", "#777", "#666"], 8);
  box(M, 630, 515, 660, 552, "#d020d0");
  M(632, 515, 650, 530, "#eee");
  M(615, 532, 628, 546, "#e01010");
  M(630, 552, 660, 578, "#0fb020");
  M(525, 574, 540, 588, "#e01010");
  M(525, 568, 535, 574, "#ddd");
  M(542, 578, 565, 581, "#fff");
  M(660, 445, 668, 452, "#ddd");
  M(660, 468, 670, 480, "#fff");
  M(660, 490, 668, 500, "#fff");
  M(668, 445, 690, 448, "#fff");
  M(668, 470, 686, 473, "#fff");
  M(668, 495, 690, 498, "#fff");

  // row 2 sheet 9
  const col = (x, c1, c2) => {
    box(M, x, 440, x + 28, 518, c1, 3);
    M(x, 432, x + 28, 440, "#bbb");
    M(x + 3, 470, x + 25, 474, c1);
    if (c2) noise(M, x + 3, 444, x + 25, 515, c2, 7);
  };
  col(773, "#e020e0", [BL, "#111", "#111", "#d82020", "#eee"]);
  col(805, "#18e018", ["#18e018", "#ddd", "#111", "#eee"]);
  col(836, "#eee", ["#15c0c0", "#eee", "#18e018", "#d82020"]);
  col(869, "#c020e0");
  col(902, "#c020e0");
  for (const x of [817, 849]) {
    M(x, 538, x + 30, 578, "#e020e0");
    for (let y = 545; y < 578; y += 9) M(x, y, x + 30, y + 2, "#888");
  }
  M(886, 552, 896, 575, "#f1e51c");
  M(896, 562, 930, 570, "#f1e51c");

  // last two small sheets
  box(M, 1018, 488, 1050, 520, "#8a8a8a");
  M(1028, 492, 1044, 504, "#15c0c0");
  M(1025, 520, 1040, 525, "#f1e51c");
  box(M, 1066, 472, 1100, 520, "#ccc");
  M(1072, 480, 1092, 510, BL);
  M(1080, 480, 1092, 494, "#ddd");
  M(1070, 520, 1095, 525, "#f1e51c");
  box(M, 1112, 472, 1146, 520, "#999");
  M(1118, 482, 1140, 510, "#15c0c0");
  M(1122, 490, 1130, 504, "#ddd");
  M(1120, 520, 1138, 525, "#f1e51c");
  box(M, 1155, 475, 1186, 520, "#1a1ad0");
  M(1160, 480, 1172, 518, "#777");
  M(1165, 488, 1178, 505, "#15c0c0");
  M(1180, 478, 1190, 484, G);
  M(1145, 532, 1175, 542, "#f1e51c");
  M(1145, 542, 1190, 546, "#f1e51c");

  box(M, 1258, 484, 1292, 502, "#999");
  M(1264, 488, 1282, 498, "#15c0c0");
  box(M, 1306, 470, 1342, 522, "#ccc");
  M(1314, 480, 1335, 512, BL);
  box(M, 1354, 472, 1392, 520, "#999");
  M(1360, 482, 1386, 510, "#c0c0d0");
  M(1362, 486, 1384, 492, "#e020e0");
  M(1362, 502, 1384, 508, "#e020e0");
  M(1400, 475, 1418, 520, "#1a1ad0");
  M(1404, 482, 1416, 512, "#15c0c0");
  M(1400, 465, 1422, 472, G);
  M(1405, 522, 1418, 528, "#f1e51c");
  M(1376, 556, 1420, 566, "#f1e51c");

  // dots along the eaves of the roof elevation
  const eaves = [];
  for (let x = 808; x < 882; x += 3) eaves.push({ x, y: 497 + Math.abs(x - 845) * 0.24, c: x % 2 ? "#d82020" : "#15c0c0" });

  // sheet frames
  const row1 = [124, 221, 317, 413, 509, 605, 702, 799, 895, 991, 1087, 1183, 1279, 1374, 1481, 1577, 1674, 1770, 1866];
  const row2 = [126, 233, 329, 424, 520, 626, 732, 838, 944, 1049, 1155, 1261];
  const sheets = [];
  row1.slice(1).forEach((x, i) => sheets.push({ x: row1[i], x2: x, y: row1[i] == 1374 ? 484 : 491, y2: 559 }));
  row2.slice(1).forEach((x, i) => sheets.push({ x: row2[i], x2: x, y: [233, 329, 424].includes(row2[i]) ? 620 : 613, y2: 688 }));
</script>

<div class="app">
  <div class="appbtn">
    <svg width="30" height="34" viewBox="0 0 30 34" fill="none">
      <path d="M1 33 14 1h9l5 32h-8l-1-7h-7l-3 7zM14 20h4l-1-9z" fill="#b3242c" />
      <path d="M14 1 1 33h4L17 3z" fill="#e23a3f" />
      <path d="M21 1l5 32h2L23 1z" fill="#7d1b20" />
    </svg>
    <svg class="appcaret" width="10" height="6" viewBox="0 0 10 6"><path d="M1 1h8L5 5z" fill="#222" /></svg>
  </div>

  <header class="titlebar">
    <div class="qat">
      {#each qat as q}<span class="ico">{@html q}</span>{/each}
    </div>
    <div class="title">Autodesk AutoCAD 2018 - STUDENT VERSION &nbsp;&nbsp; 01. BVTKTC_SUNROOF -FINAL.dwg</div>
    <div class="info">
      <span class="infoarrow"></span>
      <div class="search">Type a keyword or phrase</div>
      <span class="ico binoc">{@html ic(18, 20, `<rect x="1" y="6" width="6.500" height="12" rx="2" fill="#e8e8e8" stroke="#222"/><rect x="10.500" y="6" width="6.500" height="12" rx="2" fill="#e8e8e8" stroke="#222"/><rect x="2.500" y="1" width="4" height="5" fill="#ccc" stroke="#222"/><rect x="11.500" y="1" width="4" height="5" fill="#ccc" stroke="#222"/>`)}</span>
      <span class="ico">{@html ic(18, 20, `<circle cx="9" cy="6" r="5" fill="#2f6fc4"/><path d="M1 19c0-6 4-7 8-7s8 1 8 7z" fill="#2f6fc4"/>`)}</span>
      <span class="user">tinnguyencpc</span>
      <span class="ico">{@html ic(12, 10, dn(6, 5, "#ddd"))}</span>
      <span class="ico cart">{@html ic(18, 20, `<path d="M1 3h3l3 10h8l2-7H5" stroke="#cde" stroke-width="1.500"/><circle cx="8" cy="16" r="2" fill="#cde"/><circle cx="14" cy="16" r="2" fill="#cde"/>`)}</span>
      <span class="ico">{@html ic(18, 20, `<path d="M9 2 17 16H1z" stroke="#3a5c9c" stroke-width="2.500"/><path d="M9 2 17 16H1z" stroke="#ccd6ea" stroke-width=".8"/>`)}</span>
      <span class="ico">{@html ic(12, 10, dn(6, 5, "#ddd"))}</span>
      <span class="ico help">{@html ic(18, 18, `<circle cx="9" cy="9" r="8" fill="#f2f2f2" stroke="#2f5fa8" stroke-width="1.400"/><path d="M6 7c0-3 6-3 6 0 0 2-3 2-3 4" stroke="#2f5fa8" stroke-width="1.800"/><rect x="8" y="12.500" width="2" height="2" fill="#2f5fa8"/>`)}</span>
      <span class="ico">{@html ic(12, 10, dn(6, 5, "#ddd"))}</span>
    </div>
    <div class="winctl">
      <span class="ico">{@html ic(12, 12, `<path d="M1 6.500h10" stroke="#111"/>`)}</span>
      <span class="ico">{@html ic(12, 12, `<path d="M3 3V1h8v8H9M1 3h8v8H1z" stroke="#111"/>`)}</span>
      <span class="ico">{@html ic(12, 12, `<path d="M1 1l10 10M11 1 1 11" stroke="#111"/>`)}</span>
    </div>
  </header>

  <nav class="menubar">
    {#each menus as m}<span>{m}</span>{/each}
    <div class="docctl">
      {@html ic(52, 16, `<path d="M0 12h10" stroke="#222" stroke-width="2.500"/><path d="M19 6V2h9v9h-3M15 6h10v9H15z" stroke="#222" stroke-width="1.300"/><path d="M35 3l7 10M42 3l-7 10" stroke="#222" stroke-width="2.500"/>`)}
    </div>
  </nav>

  <div class="tabs">
    <span class="tab active">Home</span>
    {#each tabs as t}<span class="tab">{t}</span>{/each}
    <span class="ico toggle">{@html ic(22, 10, `<rect x="0" y="1" width="13" height="8" rx="2" fill="#ddd"/><path d="M4 6.500h5L6.500 3z" fill="#333"/>${dn(18, 5, "#ddd")}`)}</span>
  </div>

  {#snippet big(w, label, icon, caret = true, label2 = "")}
    <div class="big" style="width:{w}px">
      <span class="bigico">{@html icon}</span>
      <span class="biglabel">{label}</span>
      {#if label2}<span class="biglabel">{label2}</span>{/if}
      {#if caret}<i class="tri"></i>{/if}
    </div>
  {/snippet}

  {#snippet row(icon, text = "", caret = false)}
    <div class="row">
      <span class="rowico">{@html icon}</span>
      {#if text}<span class="rowtext">{text}</span>{/if}
      {#if caret}<i class="tri rowcaret"></i>{/if}
    </div>
  {/snippet}

  {#snippet foot(title, corner = false)}
    <div class="foot">
      <span>{title}</span><i class="tri"></i>
      {#if corner}<svg class="corner" width="8" height="8" viewBox="0 0 8 8"><path d="M1 1l5 5M7 2v5H2" stroke="#ddd" fill="none" /></svg>{/if}
    </div>
  {/snippet}

  <section class="ribbon">
    <div class="panel p-draw">
      <div class="body">
        {@render big(46, "Line", icons.line, false)}
        {@render big(40, "Polyline", icons.polyline, false)}
        {@render big(60, "Circle", icons.circle)}
        {@render big(32, "Arc", icons.arc)}
        <div class="col c-drawsmall">
          {@render row(icons.rect, "", true)}
          {@render row(icons.ellipseS, "", true)}
          {@render row(icons.hatch, "", true)}
        </div>
      </div>
      {@render foot("Draw")}
    </div>

    <div class="panel p-modify">
      <div class="body">
        <div class="col c-mod1">
          {@render row(icons.move, "Move")}
          {@render row(icons.copy, "Copy")}
          {@render row(icons.stretch, "Stretch")}
        </div>
        <div class="col c-mod2">
          {@render row(icons.rotate, "Rotate")}
          {@render row(icons.mirror, "Mirror")}
          {@render row(icons.scale, "Scale")}
        </div>
        <div class="col c-mod3">
          {@render row(icons.trim, "Trim", true)}
          {@render row(icons.fillet, "Fillet", true)}
          {@render row(icons.array, "Array", true)}
        </div>
        <div class="col">
          {@render row(icons.brush)}
          {@render row(icons.explode)}
          {@render row(icons.edit)}
        </div>
      </div>
      {@render foot("Modify")}
    </div>

    <div class="panel p-annot">
      <div class="body">
        {@render big(48, "Text", icons.textA)}
        {@render big(56, "Dimension", icons.dim, false)}
        <div class="col c-annot">
          {@render row(icons.linear, "Linear", true)}
          {@render row(icons.leader, "Leader", true)}
          {@render row(icons.table, "Table")}
        </div>
      </div>
      {@render foot("Annotation")}
    </div>

    <div class="panel p-layers">
      <div class="body">
        {@render big(62, "Layer", icons.layerP, false, "Properties")}
        <div class="layerside">
          <div class="combo layercombo">
            <span class="rowico">{@html icons.bulb}</span>
            <span class="rowico">{@html icons.sun}</span>
            <span class="rowico">{@html icons.lockO}</span>
            <span class="rowico">{@html icons.white}</span>
            <span class="combotext">0</span>
          </div>
          <div class="layerrow">
            {#each [icons.ly1, icons.ly2, icons.ly3, icons.ly4, icons.ly5] as i}<span class="lyico">{@html i}</span>{/each}
            <span class="rowtext">Make Current</span>
          </div>
          <div class="layerrow">
            {#each [icons.ly6, icons.ly7, icons.ly8, icons.ly9, icons.ly10] as i}<span class="lyico">{@html i}</span>{/each}
            <span class="rowtext">Match Layer</span>
          </div>
        </div>
      </div>
      {@render foot("Layers")}
    </div>

    <div class="panel p-block">
      <div class="body">
        {@render big(44, "Insert", icons.insert)}
        <div class="col c-block">
          {@render row(icons.create, "Create")}
          {@render row(icons.editB, "Edit")}
          {@render row(icons.attr, "Edit Attributes", true)}
        </div>
      </div>
      {@render foot("Block")}
    </div>

    <div class="panel p-props">
      <div class="body">
        {@render big(63, "Match", icons.match, false, "Properties")}
        <div class="col c-propico">
          {@render row(icons.wheel)}
          {@render row(icons.lw)}
          {@render row(icons.ltype)}
        </div>
        <div class="combos">
          <div class="combo"><span class="swatch"></span><span class="combotext">153,27,30</span></div>
          <div class="combo"><span class="dash"></span><span>ByLayer</span></div>
          <div class="combo"><span class="dash"></span><span>ByLayer</span></div>
        </div>
      </div>
      {@render foot("Properties", true)}
    </div>

    <div class="panel p-groups">
      <div class="body">
        {@render big(42, "Group", icons.group, false)}
        <div class="col c-group">
          {@render row(icons.gr1)}
          {@render row(icons.gr2)}
          <div class="row hl"><span class="rowico">{@html icons.gr3}</span></div>
        </div>
      </div>
      {@render foot("Groups")}
    </div>

    <div class="panel p-util">
      <div class="body">
        {@render big(70, "Measure", icons.measure)}
        <div class="col c-narrow">
          {@render row(icons.qs)}
          {@render row(icons.idpt)}
          {@render row(icons.calc)}
        </div>
      </div>
      {@render foot("Utilities")}
    </div>

    <div class="panel p-clip">
      <div class="body">
        {@render big(54, "Paste", icons.paste)}
        <div class="col c-narrow">
          {@render row(icons.cut)}
          {@render row(icons.copyC)}
        </div>
      </div>
      <div class="foot"><span>Clipboard</span></div>
    </div>

    <div class="panel p-view">
      <div class="body">
        {@render big(60, "Base", icons.base)}
      </div>
      {@render foot("View", true)}
    </div>

    <div class="ribbonrest">
      <div class="vptool">
        <span class="gripdots"></span>
        {#each [icons.vp1, icons.vp2, icons.vp3, icons.vp4, icons.vp5] as v}<span class="vpico">{@html v}</span>{/each}
        <span class="vpsep"></span>
        <div class="vpbox"><span class="vpinner"></span>{@html ic(10, 8, `<path d="M1 2l4 4 4-4" stroke="#bbb"/>`)}</div>
      </div>
    </div>
  </section>

  <main class="canvas">
    <svg class="model" width="1920" height="845" viewBox="0 166 1920 845" fill="none" shape-rendering="crispEdges">
      <rect x="0" y="316" width="1912" height="2" fill="#a61c20" />
      <rect x="0" y="808" width="1912" height="2" fill="#a61c20" />

      {#each sheets as s}
        <g>
          <rect x={s.x + 0.5} y={s.y + 0.5} width={s.x2 - s.x} height={s.y2 - s.y} stroke="#163a58" />
          <rect x={s.x + 5.5} y={s.y + 2.5} width={s.x2 - s.x - 7} height={s.y2 - s.y - 11} stroke="#1a4264" />
          <rect x={s.x + 5.5} y={s.y2 - 7.5} width={s.x2 - s.x - 7} height="6" stroke="#163a58" />
          <rect x={s.x + 3} y={s.y + 6} width="2" height={s.y2 - s.y - 16} fill="#17405f" />
          <rect x={s.x + 20} y={s.y2 - 10} width="9" height="7" fill="#12507e" />
          <rect x={s.x + 60} y={s.y2 - 9} width="20" height="2" fill="#0f5a90" />
          <rect x={s.x + 32} y={s.y2 - 5} width="26" height="1" fill="#124a70" />
          <rect x={s.x2 - 6} y={s.y2 - 6} width="3" height="3" fill="#16669c" />
        </g>
      {/each}

      <!-- roof of the elevation sheet, it sits under the rect list -->
      <path d="M808 505 845 496 881 505V510H808z" fill="#4b4a60" shape-rendering="auto" />

      {#each rects as r}
        <rect x={Math.round(r.x)} y={Math.round(r.y)} width={Math.round(r.w) || 1} height={Math.round(r.h) || 1} fill={r.c} />
      {/each}

      {#each eaves as d}
        <rect x={d.x} y={Math.round(d.y)} width="2" height="2" fill={d.c} />
      {/each}

      <g shape-rendering="auto">
        <circle cx="206" cy="634" r="10" fill="#133c68" stroke="#d8c850" />
        <path d="M156 660h25l-12 15z" fill="#18b4b4" stroke="#c8c8c8" />
        <path d="M196 658c0-13 21-13 21 0" stroke="#e020e0" stroke-width="2" />
        <path d="M156 618l30 5 16 12M153 660l-10-10v-22l10-6M181 660l14-10" stroke="#6c6c78" />
        <path d="M196 668l10-8" stroke="#bbb" />
        <path d="M625 510l6-8M648 510l3-8M668 510l5-8M720 510l5-10M760 510l5-8" stroke="#bbb" />
      </g>

      <!-- crosshair -->
      <path d="M1382.500 371V603M1382.500 619V851M1142 611.500H1374M1390 611.500H1622" stroke="#e6e6e6" />
      <rect x="1374.500" y="603.500" width="16" height="16" stroke="#e6e6e6" />

      <!-- UCS icon -->
      <path d="M20.500 940V985M26 990.500H71" stroke="#e8e8e8" />
      <rect x="16.500" y="985.500" width="9" height="9" stroke="#e8e8e8" />
      <text x="21" y="935" class="ucs">Y</text>
      <text x="74" y="988" class="ucs">X</text>
    </svg>

    <div class="vplabel">[&minus;][Top][2D Wireframe]</div>

    <div class="viewcube">
      <svg width="140" height="140" viewBox="0 0 140 140" fill="none">
        <circle cx="70" cy="70" r="54.500" stroke="#464e56" stroke-width="13" />
        <rect x="44.500" y="44.500" width="51" height="51" fill="#b2b2b2" stroke="#767b80" />
        <rect x="54" y="54" width="32" height="32" fill="#a3a7ab" />
        <text x="70" y="74.500" class="cubetop">TOP</text>
        <text x="70" y="19" class="compass">N</text>
        <text x="70" y="129" class="compass">S</text>
        <text x="126" y="77" class="compass">E</text>
        <text x="13" y="77" class="compass">W</text>
      </svg>
    </div>

    <div class="wcs"><span>WCS</span><i></i></div>

    <div class="navbar">
      <svg width="32" height="212" viewBox="0 0 32 212" fill="none" stroke="#464b50" stroke-width="1.300">
        <circle cx="25.500" cy="5" r="3" /><path d="M24 5h3" />
        <path d="M6 30C6 22 11 20 16 20s10 2 10 10c0 6-4 14-10 14S6 36 6 30z" />
        <circle cx="16" cy="30" r="7" />
        <path d="M13 50h6l-3 3z" fill="#464b50" stroke="none" />
        <path d="M4 57h24" stroke-width=".8" />
        <path d="M8 82c-3-3-5-6-4-7 1-2 4 1 5 3l-1-10c0-3 3-3 3 0l1 7 0-9c0-3 3-3 3 0v9l1-8c1-3 3-2 3 0l0 9 2-6c1-3 3-2 3 0 0 5-2 13-4 16H12z" />
        <path d="M6 97l10 10M6 97v5M6 97h5M6 121l9-9M6 121v-5M6 121h5M26 97 18 105M26 97v5M26 97h-5" />
        <circle cx="19" cy="115" r="5" /><path d="M23 119l5 4" stroke-width="2.500" />
        <path d="M13 120h6l-3 3z" fill="#464b50" stroke="none" />
        <path d="M16 125l-5 5h3v18h4v-18h3z" />
        <ellipse cx="16" cy="139" rx="11" ry="5" />
        <path d="M13 159h6l-3 3z" fill="#464b50" stroke="none" />
        <path d="M4 163h24" stroke-width=".8" />
        <rect x="4.500" y="172" width="6" height="6" /><rect x="13" y="172" width="6" height="6" /><rect x="21.500" y="172" width="6" height="6" />
        <rect x="4.500" y="180" width="16" height="13" />
        <path d="M9 182v9l7-4.500z" fill="#464b50" stroke="none" />
        <circle cx="25.500" cy="205" r="3" /><path d="M24 205h3" />
      </svg>
    </div>

    <div class="scrollstrip"></div>

    <div class="cmd">
      <div class="cmdhandle">
        <span class="gripdots"></span>
        {@html ic(12, 12, `<path d="M2 2l8 8M10 2l-8 8" stroke="#ddd" stroke-width="2.500"/>`)}
        {@html ic(18, 18, `<path d="M3 4c1-2 4-2 5-1L6 6l2 2 3-2c1 1 1 3 0 4l6 6-2 2-6-6c-1 1-4 1-5 0s-1-3-1-6z" fill="#ddd" stroke="#333" stroke-width=".5"/>`)}
      </div>
      <div class="cmdinput">
        {@html ic(24, 18, `<rect x="1.500" y="1.500" width="13" height="14" fill="#c8cacc" stroke="#6f7377"/><path d="M4 5l3 3-3 3M8 12h4" stroke="#333"/>${dn(20, 8, "#666")}`)}
        <span class="cmdtext">Type &nbsp;a &nbsp;command</span>
        <svg class="cmdup" width="10" height="6" viewBox="0 0 10 6"><path d="M0 6h10L5 0z" fill="#111" /></svg>
      </div>
    </div>
  </main>

  <footer class="bottom">
    <div class="layouts">
      <span class="ltab ltab-on">Model</span>
      <span class="ltab">Layout1</span>
      <span class="ltab ltab-plus">+</span>
    </div>
    <div class="status">
      {#each status as c}
        <div class="cell" class:right={c.right} style="width:{c.w}px">
          {#if c.text}<span>{c.text}</span>{:else}
            <svg width={c.w - 2} height="24" viewBox="0 1 {c.w - 2} 24" fill="none">{@html c.body}</svg>
          {/if}
        </div>
      {/each}
    </div>
  </footer>
</div>

<style>
  :global(body) {
    margin: 0;
    background: #212830;
  }
  .app {
    position: relative;
    width: 1920px;
    height: 1040px;
    overflow: hidden;
    display: flex;
    flex-direction: column;
    font-family: Roboto, "Liberation Sans", sans-serif;
    font-size: 12px;
    color: #e4e4e4;
  }
  .ico,
  .rowico,
  .bigico,
  .lyico,
  .vpico {
    display: flex;
    align-items: center;
    justify-content: center;
    flex: none;
  }

  .appbtn {
    position: absolute;
    left: 0;
    top: 0;
    z-index: 3;
    width: 39px;
    height: 39px;
    box-sizing: border-box;
    border: 1px solid #111;
    background: linear-gradient(#7c7c7c, #666);
    padding: 3px 0 0 3px;
  }
  .appcaret {
    position: absolute;
    left: 29px;
    top: 21px;
  }

  .titlebar {
    height: 24px;
    flex: none;
    display: flex;
    background: #fff;
    color: #222;
    position: relative;
  }
  .qat {
    margin-left: 40px;
    width: 212px;
    padding-left: 12px;
    box-sizing: border-box;
    height: 24px;
    background: linear-gradient(#848484, #6c6c6c);
    display: flex;
    align-items: center;
    gap: 6px;
  }
  .title {
    position: absolute;
    left: 566px;
    top: 5px;
    white-space: nowrap;
    font-size: 12px;
    letter-spacing: -0.12px;
    color: #222;
  }
  .info {
    position: absolute;
    left: 1310px;
    top: 0;
    width: 447px;
    height: 24px;
    background: linear-gradient(#808080, #6a6a6a);
    display: flex;
    align-items: center;
    color: #e4e4e4;
  }
  .infoarrow {
    width: 0;
    height: 0;
    margin-left: 5px;
    margin-right: 5px;
    border-left: 4px solid #ddd;
    border-top: 4px solid transparent;
    border-bottom: 4px solid transparent;
  }
  .search {
    width: 179px;
    height: 22px;
    box-sizing: border-box;
    border: 1px solid #3a3a3a;
    background: #6b6b6b;
    color: #cfcfcf;
    font-style: italic;
    line-height: 20px;
    padding-left: 3px;
    margin-right: 4px;
  }
  .binoc {
    margin-right: 8px;
  }
  .user {
    margin-left: 4px;
    width: 80px;
  }
  .cart {
    margin-left: 6px;
    margin-right: 6px;
  }
  .help {
    margin-left: 10px;
  }
  .winctl {
    position: absolute;
    left: 1798px;
    top: 6px;
    width: 103px;
    display: flex;
    justify-content: space-between;
  }

  .menubar {
    height: 21px;
    flex: none;
    box-sizing: border-box;
    border-top: 1px solid #2e2e2e;
    background: linear-gradient(#7b7b7b, #474747);
    display: flex;
    align-items: center;
    gap: 23.5px;
    padding-left: 55px;
    position: relative;
  }
  .docctl {
    position: absolute;
    right: 6px;
    top: 2px;
  }

  .tabs {
    height: 20px;
    flex: none;
    box-sizing: border-box;
    border-top: 1px solid #2e2e2e;
    border-bottom: 1px solid #2b2b2b;
    background: #414141;
    display: flex;
    align-items: flex-end;
    gap: 19.6px;
    padding-left: 4px;
    color: #cfcfcf;
  }
  .tab {
    height: 18px;
    line-height: 19px;
  }
  .tab.active {
    width: 51px;
    box-sizing: border-box;
    text-align: center;
    margin-right: -9px;
    background: #545454;
    border: 1px solid #6a6a6a;
    border-bottom: none;
    color: #f2f2f2;
  }
  .toggle {
    margin-left: -8px;
    align-self: center;
  }

  .ribbon {
    flex: none;
    display: flex;
    background: #3e3e3e;
    border-bottom: 3px solid #6e6e6e;
    box-sizing: content-box;
    height: 98px;
  }
  .panel {
    flex: none;
    box-sizing: border-box;
    border-right: 1px solid #383838;
    background: #535353;
    display: flex;
    flex-direction: column;
    height: 98px;
  }
  .p-draw { width: 226px; }
  .p-modify { width: 250px; }
  .p-annot { width: 189px; }
  .p-layers { width: 273px; }
  .p-block { width: 161px; }
  .p-props { width: 265px; }
  .p-groups { width: 69px; }
  .p-util { width: 97px; }
  .p-clip { width: 80px; }
  .p-view { width: 61px; }
  .body {
    height: 80px;
    display: flex;
    padding-top: 5px;
    box-sizing: border-box;
  }
  .foot {
    height: 18px;
    background: #474747;
    display: flex;
    align-items: center;
    justify-content: center;
    gap: 6px;
    position: relative;
    color: #e8e8e8;
    padding-top: 1px;
    box-sizing: border-box;
  }
  .corner {
    position: absolute;
    right: 3px;
    top: 5px;
  }
  .tri {
    display: block;
    flex: none;
    width: 0;
    height: 0;
    border-left: 3.500px solid transparent;
    border-right: 3.500px solid transparent;
    border-top: 4px solid #e4e4e4;
  }
  .big {
    flex: none;
    display: flex;
    flex-direction: column;
    align-items: center;
  }
  .bigico {
    height: 38px;
    margin-bottom: 1px;
  }
  .biglabel {
    line-height: 15px;
    white-space: nowrap;
  }
  .big .tri {
    margin-top: 2px;
  }
  .col {
    display: flex;
    flex-direction: column;
    flex: none;
  }
  .row {
    height: 24px;
    display: flex;
    align-items: center;
    position: relative;
  }
  .rowico {
    width: 18px;
  }
  .rowtext {
    margin-left: 4px;
    white-space: nowrap;
  }
  .rowcaret {
    margin-left: auto;
  }
  .c-drawsmall {
    width: 31px;
    margin-left: 7px;
  }
  .c-mod1 {
    margin-left: 5px;
    width: 71px;
  }
  .c-mod2 {
    width: 71px;
  }
  .c-mod3 {
    width: 61px;
    margin-right: 14px;
  }
  .c-annot {
    margin-left: 8px;
    width: 68px;
  }
  .layerside {
    width: 208px;
    margin-left: -1px;
    display: flex;
    flex-direction: column;
  }
  .layerside .rowtext {
    margin-left: 2px;
  }
  .combo {
    height: 21px;
    box-sizing: border-box;
    border: 1px solid #343434;
    background: #5e5e5e;
    display: flex;
    align-items: center;
    position: relative;
    margin-top: 1px;
    margin-bottom: 2px;
  }
  .combo::after {
    content: "";
    position: absolute;
    right: 4px;
    top: 7px;
    border-left: 4px solid transparent;
    border-right: 4px solid transparent;
    border-top: 5px solid #eee;
  }
  .combotext {
    margin-left: 6px;
  }
  .layercombo {
    background: #4b4b4b;
    padding-left: 1px;
  }
  .layerrow {
    height: 24px;
    display: flex;
    align-items: center;
  }
  .lyico {
    width: 24px;
  }
  .c-block {
    width: 111px;
  }
  .c-propico {
    width: 18px;
  }
  .combos {
    width: 180px;
    display: flex;
    flex-direction: column;
  }
  .combos .combo {
    height: 22px;
    margin: 0 0 2px;
  }
  .combos .combo:first-child {
    height: 21px;
    margin-top: 1px;
  }
  .swatch {
    width: 14px;
    height: 15px;
    margin-left: 12px;
    margin-right: 5px;
    background: #991b1e;
    border: 1px solid #777;
  }
  .dash {
    width: 58px;
    height: 1px;
    background: #eee;
    margin: 0 3px 0 8px;
  }
  .c-group {
    width: 24px;
    align-items: center;
  }
  .hl {
    width: 24px;
    height: 23px;
    justify-content: center;
    box-sizing: border-box;
    background: linear-gradient(#5a7fb0, #3d6394);
    border: 1px solid #2e3f58;
  }
  .c-narrow {
    width: 26px;
    align-items: center;
  }
  .ribbonrest {
    flex: 1;
    padding: 3px 0 0 15px;
  }
  .vptool {
    height: 24px;
    background: #454545;
    border: 1px solid #2e2e2e;
    border-right: none;
    display: flex;
    align-items: center;
  }
  .gripdots {
    width: 3px;
    height: 16px;
    margin-left: 4px;
    background-image: radial-gradient(#aaa 1px, transparent 1px);
    background-size: 3px 3px;
  }
  .vpico {
    width: 23px;
  }
  .vpsep {
    width: 1px;
    height: 20px;
    background: #222;
    margin: 0 3px;
  }
  .vpbox {
    width: 100px;
    height: 24px;
    background: #fff;
    display: flex;
    align-items: center;
    padding-left: 3px;
    box-sizing: border-box;
    gap: 7px;
  }
  .vpinner {
    width: 77px;
    height: 20px;
    background: #ececec;
  }

  .canvas {
    flex: 1;
    position: relative;
    background: #212830;
  }
  .model {
    position: absolute;
    left: 0;
    top: 0;
  }
  .ucs {
    font-family: "Liberation Sans", sans-serif;
    font-size: 17px;
    fill: #dcdcdc;
    font-weight: 400;
  }
  .vplabel {
    position: absolute;
    left: 4px;
    top: 8px;
    color: #dcdcdc;
    letter-spacing: 0.22px;
  }
  .viewcube {
    position: absolute;
    left: 1759px;
    top: 13px;
  }
  .compass {
    font-family: "Liberation Sans", sans-serif;
    font-size: 20px;
    font-weight: 700;
    fill: #a4a6a8;
    text-anchor: middle;
  }
  .cubetop {
    font-size: 12px;
    font-weight: 700;
    fill: #4c5257;
    text-anchor: middle;
  }
  .wcs {
    position: absolute;
    left: 1805px;
    top: 171px;
    width: 48px;
    height: 16px;
    box-sizing: border-box;
    border-radius: 4px;
    background: #7e828d;
    color: #454a50;
    font-size: 11px;
    line-height: 15px;
    padding-left: 5px;
    display: flex;
    gap: 3px;
    align-items: center;
  }
  .wcs i {
    display: block;
    width: 0;
    height: 0;
    border-left: 4px solid transparent;
    border-right: 4px solid transparent;
    border-top: 5px solid #9a9ea8;
  }
  .navbar {
    position: absolute;
    left: 1876px;
    top: 213px;
    width: 32px;
    height: 212px;
    border-radius: 5px;
    background: #5d6267;
    box-shadow: 1px 1px 2px #111;
  }
  .scrollstrip {
    position: absolute;
    right: 0;
    top: 0;
    bottom: 0;
    width: 8px;
    background: #b4d0ee;
  }
  .cmd {
    position: absolute;
    left: 570px;
    top: 818px;
    width: 780px;
    height: 27px;
    display: flex;
  }
  .cmdhandle {
    width: 53px;
    flex: none;
    box-sizing: border-box;
    border-radius: 3px 0 0 0;
    background: linear-gradient(#555, #3a3a3a);
    border: 1px solid #2a2a2a;
    display: flex;
    align-items: center;
    gap: 5px;
  }
  .cmdinput {
    flex: 1;
    margin: 1px 0;
    background: #bcbdbf;
    border-radius: 0 3px 0 0;
    display: flex;
    align-items: center;
    padding-left: 5px;
    position: relative;
  }
  .cmdtext {
    margin-left: 6px;
    margin-bottom: 2px;
    font-style: italic;
    color: #6e6e6e;
    letter-spacing: 0.4px;
  }
  .cmdup {
    position: absolute;
    right: 3px;
    top: 10px;
  }

  .bottom {
    height: 29px;
    flex: none;
    background: #3b3b3b;
    border-top: 1px solid #555;
    box-sizing: border-box;
    display: flex;
  }
  .layouts {
    width: 623px;
    flex: none;
    display: flex;
    padding-left: 11px;
    box-sizing: border-box;
    align-items: flex-start;
    gap: 3px;
  }
  .ltab {
    height: 17px;
    width: 62px;
    line-height: 16px;
    text-align: center;
    background: linear-gradient(#6a6a6a, #565656);
    color: #cfcfcf;
    clip-path: polygon(0 0, 100% 0, 93% 100%, 7% 100%);
  }
  .ltab-on {
    width: 58px;
    background: linear-gradient(#8a8a8a, #5c5c5c);
    color: #fff;
    font-weight: 700;
  }
  .ltab-plus {
    width: 19px;
    margin-left: 5px;
    font-weight: 700;
    font-size: 14px;
    color: #ddd;
  }
  .status {
    display: flex;
    gap: 2px;
    padding-top: 0;
  }
  .cell {
    height: 26px;
    flex: none;
    box-sizing: border-box;
    border: 1px solid #707070;
    background: #4a4a4a;
    color: #f4f4f4;
    display: flex;
    align-items: center;
    justify-content: center;
  }
  .right {
    justify-content: flex-end;
    padding-right: 5px;
  }
  .cell :global(.st),
  .st {
    font-size: 12px;
    fill: #f0f0f0;
    font-family: Roboto, sans-serif;
  }
</style>
